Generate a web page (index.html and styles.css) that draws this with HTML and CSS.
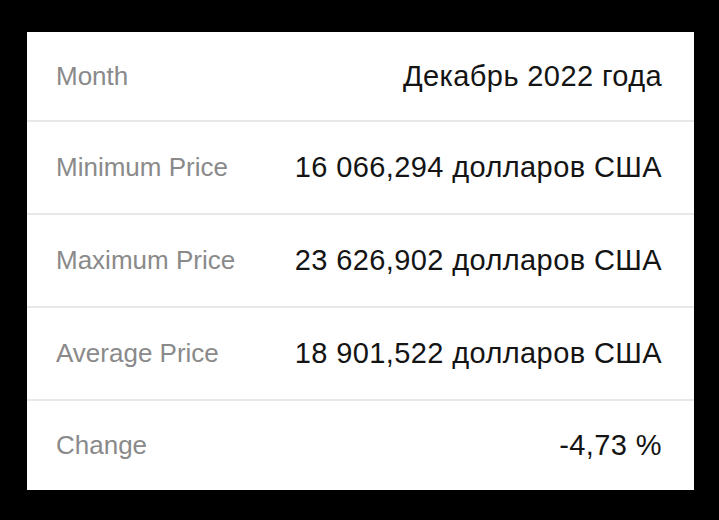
FILE: index.html
```html
<!DOCTYPE html>
<html lang="ru">
<head>
<meta charset="utf-8">
<link rel="stylesheet" href="styles.css">
</head>
<body>
<div class="card">
  <div class="row"><span class="label">Month</span><span class="value">Декабрь 2022 года</span></div>
  <div class="row"><span class="label">Minimum Price</span><span class="value">16 066,294 долларов США</span></div>
  <div class="row"><span class="label">Maximum Price</span><span class="value">23 626,902 долларов США</span></div>
  <div class="row"><span class="label">Average Price</span><span class="value">18 901,522 долларов США</span></div>
  <div class="row"><span class="label">Change</span><span class="value">-4,73 %</span></div>
</div>
</body>
</html>
```
FILE: styles.css
```css
html, body {
  margin: 0;
  background: #000;
  height: 100%;
}
body {
  padding: 32px 0 0 27px;
  box-sizing: border-box;
  font-family: "Liberation Sans", Arial, sans-serif;
}
.card {
  width: 667px;
  background: #fff;
  display: flex;
  flex-direction: column;
}
.row {
  height: 91px;
  display: flex;
  align-items: center;
  justify-content: space-between;
  padding: 0 32px 0 29px;
}
.row:first-child {
  height: 88px;
}
.row:last-child {
  height: 89px;
}
.row + .row {
  border-top: 2px solid #e8e8e8;
}
.label {
  color: #8a8a8a;
  font-size: 26px;
}
.value {
  color: #141414;
  font-size: 29px;
  letter-spacing: 0.4px;
}
```
